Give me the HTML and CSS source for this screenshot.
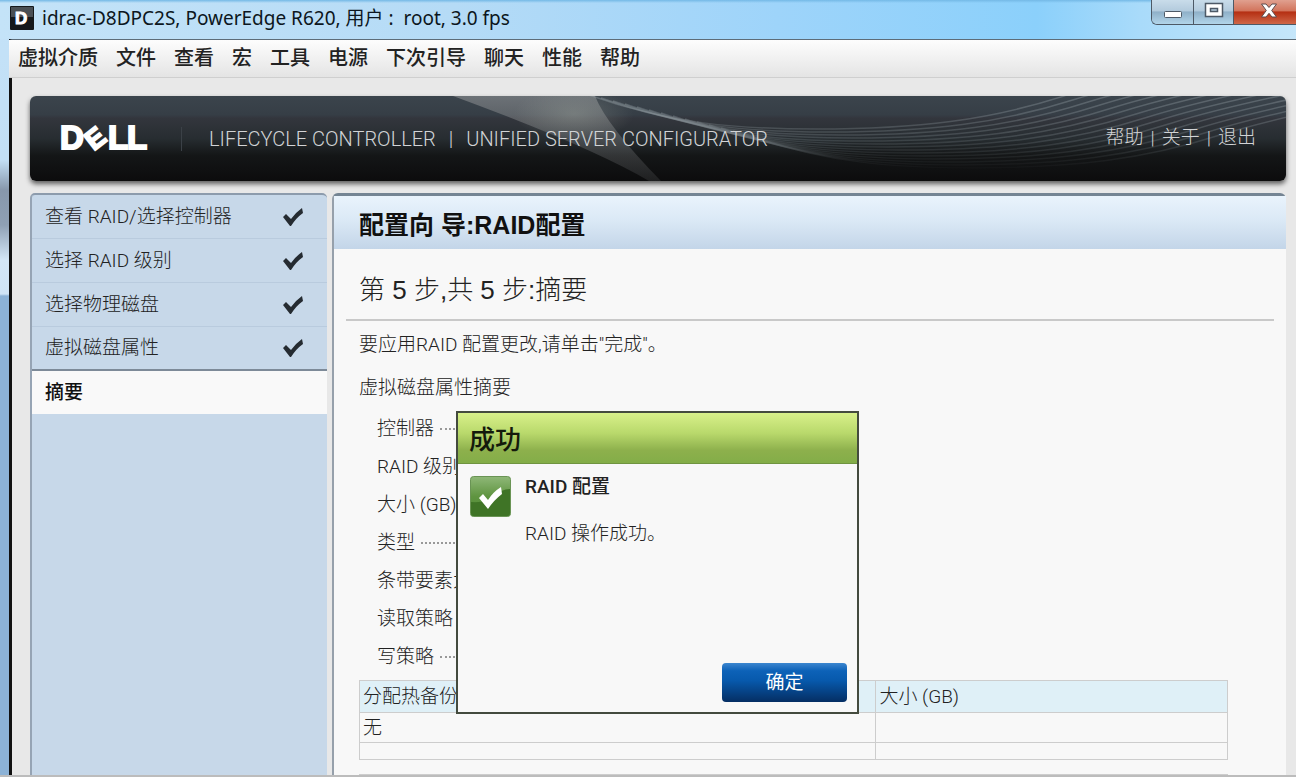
FILE: index.html
```html
<!DOCTYPE html>
<html lang="zh-CN">
<head>
  <meta charset="UTF-8" />
  <meta name="viewport" content="width=device-width, initial-scale=1" />
  <title>idrac-D8DPC2S, PowerEdge R620</title>
  <link rel="stylesheet" href="styles.css">
</head>
<body>

<div class="window">
  <div class="titlebar">
    <svg class="app-icon" width="24" height="24" viewBox="0 0 24 24" aria-hidden="true">
      <rect width="24" height="24" rx="1" fill="#15181b" />
      <rect x="1" y="1" width="22" height="10" fill="#4a4f54" />
      <text x="5" y="18" font-family="Liberation Sans, sans-serif" font-size="17" font-weight="bold" fill="#fff" stroke="#fff">D</text>
    </svg>
    <span class="window-title">idrac-D8DPC2S, PowerEdge R620, 用户 :&nbsp; root, 3.0 fps</span>
    <div class="window-buttons">
      <button class="win-btn" aria-label="最小化">
        <svg width="20" height="20" viewBox="0 0 20 20"><rect x="1.5" y="9.5" width="17" height="6" rx="1" fill="#fff" stroke="#4d5966" /></svg>
      </button>
      <button class="win-btn" aria-label="最大化">
        <svg width="20" height="20" viewBox="0 0 20 20"><path d="M1.500 1.500h17v13h-17zM6.500 6.500v3h7v-3z" fill="#fff" fill-rule="evenodd" stroke="#4d5966" stroke-width="1.500" /></svg>
      </button>
      <button class="win-btn close" aria-label="关闭">
        <svg width="20" height="20" viewBox="0 0 20 20"><path d="M2.500 2h4.500l3 3.500 3-3.500h4.500l-4.800 6.500 4.800 6.500h-4.500l-3-3.700-3 3.700h-4.500l4.800-6.500z" fill="#fff" stroke="#5c4a4c" /></svg>
      </button>
    </div>
  </div>

  <div class="client">
    <div class="menubar">
      <button>虚拟介质</button>
      <button>文件</button>
      <button>查看</button>
      <button>宏</button>
      <button>工具</button>
      <button>电源</button>
      <button>下次引导</button>
      <button>聊天</button>
      <button>性能</button>
      <button>帮助</button>
    </div>

    <div class="page">
      <header class="banner">
        <svg class="banner-art" viewBox="0 0 1257 85" preserveAspectRatio="xMaxYMid slice" aria-hidden="true">
          <defs>
            <linearGradient id="beam" x1="0" y1="0" x2="0" y2="1">
              <stop offset="0" stop-color="#8d9093" stop-opacity="0.6" />
              <stop offset="1" stop-color="#6a6c6e" stop-opacity="0.2" />
            </linearGradient>
            <radialGradient id="glow">
              <stop offset="0" stop-color="#a0a89f" stop-opacity="0.35" />
              <stop offset="1" stop-color="#a0a89f" stop-opacity="0" />
            </radialGradient>
            <linearGradient id="fade" x1="0" y1="0" x2="0" y2="85" gradientUnits="userSpaceOnUse">
              <stop offset="0" stop-color="#fff" />
              <stop offset="0.45" stop-color="#aaa" />
              <stop offset="0.9" stop-color="#000" />
            </linearGradient>
            <mask id="fade-mask" maskUnits="userSpaceOnUse" x="0" y="0" width="1257" height="85">
              <rect width="1257" height="85" fill="url(#fade)" />
            </mask>
            <path id="wave" d="M560 -1 C640 28 710 33 787 33 C890 33 960 24 1035 0 C1080 -14 1150 -30 1257 -50" fill="none" stroke="#9aa5ac" stroke-opacity="0.36" stroke-width="1.500" />
          </defs>
          <path d="M424 0H566Q578 30 632 85H620Q560 50 424 0z" fill="url(#beam)" />
          <ellipse cx="545" cy="18" rx="60" ry="26" fill="url(#glow)" />
          <g mask="url(#fade-mask)">
            <use href="#wave" />
            <use href="#wave" x="12" y="3" />
            <use href="#wave" x="24" y="6" />
            <use href="#wave" x="36" y="9" />
            <use href="#wave" x="48" y="12" />
            <use href="#wave" x="60" y="15" />
            <use href="#wave" x="72" y="18" />
            <use href="#wave" x="84" y="21" />
            <use href="#wave" x="96" y="24" />
            <use href="#wave" x="108" y="27" />
            <use href="#wave" x="120" y="30" />
            <use href="#wave" x="132" y="33" />
            <use href="#wave" x="144" y="36" />
            <use href="#wave" x="156" y="39" />
          </g>
        </svg>
        <svg class="logo" width="96" height="44" viewBox="0 0 96 44" role="img" aria-label="DELL">
          <g font-family="Liberation Sans, sans-serif" font-weight="bold" font-size="33" fill="#fff" stroke="#fff" stroke-width="2">
            <text x="0" y="32">D</text>
            <text x="-10" y="9" font-size="27" transform="translate(36 21) rotate(-38)">E</text>
            <text x="48" y="32">L</text>
            <text x="67" y="32">L</text>
          </g>
        </svg>
        <div class="product">
          <span>LIFECYCLE CONTROLLER</span>
          <span class="bar">|</span>
          <span>UNIFIED SERVER CONFIGURATOR</span>
        </div>
        <nav class="banner-links">
          <a href="#">帮助</a><span>|</span><a href="#">关于</a><span>|</span><a href="#">退出</a>
        </nav>
      </header>

      <div class="columns">
        <nav class="steps">
          <a href="#">查看 RAID/选择控制器
            <svg class="tick" width="22" height="20" viewBox="0 0 22 20"><path d="M1 10l3-3 5 5Q13 6 20 1l1 5Q14 11 9 19H8z" /></svg></a>
          <a href="#">选择 RAID 级别
            <svg class="tick" width="22" height="20" viewBox="0 0 22 20"><path d="M1 10l3-3 5 5Q13 6 20 1l1 5Q14 11 9 19H8z" /></svg></a>
          <a href="#">选择物理磁盘
            <svg class="tick" width="22" height="20" viewBox="0 0 22 20"><path d="M1 10l3-3 5 5Q13 6 20 1l1 5Q14 11 9 19H8z" /></svg></a>
          <a href="#">虚拟磁盘属性
            <svg class="tick" width="22" height="20" viewBox="0 0 22 20"><path d="M1 10l3-3 5 5Q13 6 20 1l1 5Q14 11 9 19H8z" /></svg></a>
          <a href="#" class="current">摘要</a>
        </nav>

        <main class="panel">
          <h1>配置向 导:RAID配置</h1>
          <h2>第 5 步,共 5 步:摘要</h2>
          <div class="content">
            <p>要应用RAID 配置更改,请单击"完成"。</p>
            <p>虚拟磁盘属性摘要</p>
            <ul class="summary">
              <li>控制器</li>
              <li>RAID 级别</li>
              <li>大小 (GB)</li>
              <li>类型</li>
              <li>条带要素大小</li>
              <li>读取策略</li>
              <li>写策略</li>
            </ul>
            <table class="spares">
              <thead>
                <tr><th>分配热备份</th><th>大小 (GB)</th></tr>
              </thead>
              <tbody>
                <tr><td>无</td><td></td></tr>
                <tr class="empty"><td></td><td></td></tr>
              </tbody>
            </table>
            <div class="next-table"></div>
          </div>
        </main>
      </div>
    </div>
  </div>

  <div class="dialog" role="dialog" aria-labelledby="dialog-title">
    <h3 id="dialog-title">成功</h3>
    <div class="dialog-body">
      <svg class="success" width="41" height="41" viewBox="0 0 41 41" aria-hidden="true">
        <defs>
          <linearGradient id="green" x1="0" y1="0" x2="0" y2="1">
            <stop offset="0" stop-color="#8fb878" />
            <stop offset="0.5" stop-color="#5f9440" />
            <stop offset="1" stop-color="#4d8a35" />
          </linearGradient>
        </defs>
        <rect x="0.5" y="0.5" width="40" height="40" rx="3" fill="url(#green)" stroke="#6a9455" />
        <path d="M1 26Q18 27 26 20Q31 13 40 13V37Q40 40 37 40H4Q1 40 1 37z" fill="#3f7426" />
        <path d="M9 22l4-4 5 6Q23 16 31 11l1 7Q24 24 18 33z" fill="#fff" />
      </svg>
      <div class="message">
        <h4>RAID 配置</h4>
        <p>RAID 操作成功。</p>
      </div>
    </div>
    <div class="dialog-actions">
      <button class="ok">确定</button>
    </div>
  </div>
</div>

</body>
</html>
```
FILE: styles.css
```css
* {
  box-sizing: border-box;
}
body {
  margin: 0;
  font-family: Roboto, "Noto Sans CJK SC", sans-serif;
  font-size: 19px;
  line-height: 28px;
  font-weight: 300;
  color: #222;
}
h1, h2, h3, h4, p, ul {
  margin: 0;
  padding: 0;
}
a {
  color: inherit;
  text-decoration: none;
}
button {
  font: inherit;
  color: inherit;
  border: none;
  padding: 0;
  background: none;
  cursor: pointer;
}

/* window frame */
.window {
  position: relative;
  display: flex;
  flex-direction: column;
  min-height: 100vh;
  padding-left: 9px;
  border-bottom: 2px solid #bcbcbc;
  background: linear-gradient(#c3e2f8 0, #c3dff5 160px, #8797ab 190px, #8fa0b4 225px, #d3e6f6 260px, #d0e4f5 294px, #8cb2d6 296px, #8cb2d6 100%);
}
.titlebar {
  display: flex;
  align-items: flex-start;
  height: 39px;
  margin-left: -9px;
  padding-left: 10px;
  background: linear-gradient(#74b9e6 0, transparent 3px), linear-gradient(90deg, #c4e3f8 0, #b5dbf6 35%, #9ed4fa 60%, #8bd0fb 80%, #a9dbfa 88%, #c5e6fa 100%);
}
.app-icon {
  margin-top: 6px;
}
.window-title {
  margin: 4px 0 0 8px;
  font-family: "Noto Sans", "Noto Sans CJK SC", sans-serif;
  font-size: 19px;
  font-weight: 400;
  color: #0c1620;
  white-space: nowrap;
}
.window-buttons {
  display: flex;
  margin-left: auto;
  border: 1px solid #4d5966;
  border-width: 0 0 1px 1px;
  border-radius: 0 0 0 6px;
  overflow: hidden;
}
.win-btn {
  display: flex;
  align-items: center;
  justify-content: center;
  width: 42px;
  height: 24px;
  border-right: 1px solid #4d5966;
  background: linear-gradient(#c9dcea 0, #b3cbdd 45%, #8fb0c8 50%, #b2d5ea 100%);
}
.win-btn + .win-btn {
  width: 40px;
}
.win-btn.close {
  width: 62px;
  padding-left: 8px;
  border-right: none;
  background: linear-gradient(#e0a08f 0, #d2745c 45%, #b52f13 50%, #cf6647 100%);
}
.client {
  flex: 1;
  display: flex;
  flex-direction: column;
  border-left: 3px solid #111;
  border-top: 1px solid #5d6c78;
  background: #e8e8e8;
}
.menubar {
  display: flex;
  gap: 18px;
  height: 38px;
  margin-left: -3px;
  padding-left: 9px;
  border-bottom: 1px solid #cfcfcf;
  background: linear-gradient(#fdfdfd, #e4e4e4);
}
.menubar button {
  padding-bottom: 2px;
  font-size: 20px;
  font-weight: 500;
  color: #222;
}

/* page */
.page {
  flex: 1;
  display: flex;
  flex-direction: column;
  padding: 18px 10px 0 18px;
}
.banner {
  position: relative;
  display: flex;
  align-items: center;
  height: 85px;
  padding: 0 30px;
  border-radius: 6px;
  overflow: hidden;
  color: #d2d4d6;
  background: linear-gradient(#3b444c 0, #363e46 22%, #33363d 26%, #272d31 50%, #141617 70%, #0c0c0d 100%);
  box-shadow: 0 3px 5px rgba(0,0,0,0.6);
}
.banner-art {
  position: absolute;
  inset: 0;
  width: 100%;
  height: 100%;
}
.logo {
  position: relative;
}
.product {
  position: relative;
  display: flex;
  gap: 13px;
  margin-left: 25px;
  padding-left: 27px;
  border-left: 1px solid #3b4147;
  font-size: 20px;
  line-height: 24px;
}
.banner-links {
  position: relative;
  display: flex;
  gap: 7px;
  margin-left: auto;
  padding-bottom: 2px;
}
.columns {
  flex: 1;
  display: flex;
  gap: 5px;
  margin-top: 12px;
}
.steps {
  width: 297px;
  border-top: 2px solid #8c9bac;
  border-left: 2px solid #96a4b4;
  border-radius: 5px 5px 0 0;
  background: #c7d8e9;
}
.steps a {
  display: flex;
  align-items: center;
  justify-content: space-between;
  height: 44px;
  padding: 0 23px 0 13px;
  border-bottom: 1px solid #b9cbde;
}
.steps a:nth-child(4) {
  border-bottom: 2px solid #7d8a98;
}
.steps a.current {
  height: 43px;
  border-bottom: none;
  background: #f9f9f9;
  font-weight: 500;
  color: #111;
}
.tick {
  fill: #252b31;
}
.panel {
  flex: 1;
  border-top: 3px solid #748493;
  border-left: 2px solid #96a0ab;
  border-radius: 6px 6px 0 0;
  background: #f8f8f8;
}
.panel h1, .panel h2, .dialog h3 {
  font-family: "Liberation Sans", "Noto Sans CJK SC", sans-serif;
  font-size: 26px;
}
.panel h1 {
  padding: 5px 0 0 25px;
  font-size: 25px;
  line-height: 48px;
  color: #111;
  background: linear-gradient(#e9f3fc 0, #dbe9f6 45%, #c3d5e8 100%);
}
.panel h2 {
  margin: 0 12px 0 12px;
  padding: 16px 0 4px 13px;
  border-bottom: 2px solid #c9c9c9;
  line-height: 50px;
  font-weight: 300;
}
.content {
  padding: 10px 58px 0 25px;
}
.content p {
  margin-bottom: 15px;
}
.summary {
  width: 240px;
  margin-top: -7px;
  padding-left: 18px;
  list-style: none;
}
.summary li {
  display: flex;
  align-items: center;
  gap: 6px;
  height: 38px;
  white-space: nowrap;
}
.summary li::after {
  content: "";
  flex: 1;
  border-top: 2px dotted #999;
}
.spares {
  width: 100%;
  margin-top: 4px;
  border-collapse: collapse;
  table-layout: fixed;
}
.spares th, .spares td {
  height: 30px;
  padding: 0 3px;
  border: 1px solid #cdcdcd;
  font-weight: 300;
  line-height: 26px;
  text-align: left;
}
.spares th {
  height: 32px;
  background: #dff0f7;
}
.spares th:first-child {
  width: 59.5%;
}
.spares .empty td {
  height: 17px;
}
.next-table {
  height: 1px;
  margin-top: 14px;
  background: #cdcdcd;
}

/* result dialog, over the page */
.dialog {
  position: absolute;
  left: 456px;
  top: 411px;
  display: flex;
  flex-direction: column;
  width: 403px;
  height: 303px;
  border: 2px solid #444b3e;
  background: #f8f8f8;
}
.dialog h3 {
  padding: 4px 0 0 11px;
  border-bottom: 1px solid #6f9440;
  line-height: 46px;
  font-weight: 500;
  color: #141a0c;
  background: linear-gradient(#d8f08a 0, #b9d96c 40%, #8db04c 75%, #83ad48 100%);
}
.dialog-body {
  flex: 1;
  display: flex;
  gap: 14px;
  padding: 12px;
}
.message {
  margin-top: -3px;
}
.message h4 {
  margin-bottom: 19px;
  font-size: 19px;
  font-weight: 500;
}
.dialog-actions {
  display: flex;
  justify-content: flex-end;
  padding: 10px;
}
.ok {
  width: 125px;
  height: 39px;
  border-radius: 4px;
  color: #fff;
  font-weight: 400;
  background: linear-gradient(#3c86cf 0, #0d62b8 20%, #0759ac 45%, #052e63 100%);
}
```
